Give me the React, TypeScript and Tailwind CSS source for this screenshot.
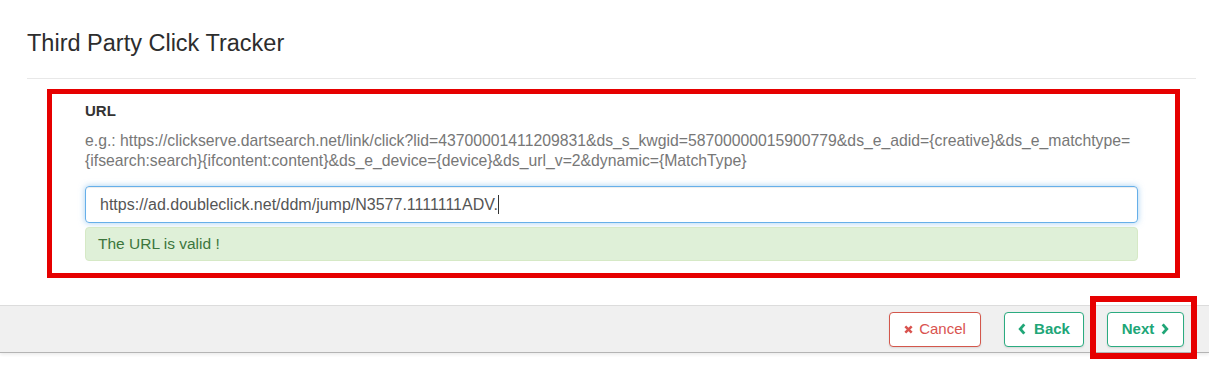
const exampleLine1 =
  "e.g.: https://clickserve.dartsearch.net/link/click?lid=43700001411209831&ds_s_kwgid=58700000015900779&ds_e_adid={creative}&ds_e_matchtype=";
const exampleLine2 =
  "{ifsearch:search}{ifcontent:content}&ds_e_device={device}&ds_url_v=2&dynamic={MatchType}";

function TimesIcon() {
  return (
    <svg width="9" height="9" viewBox="0 0 9 9" className="flex-none">
      <path d="M1.3 1.3 L7.7 7.7 M7.7 1.3 L1.3 7.7" stroke="currentColor" strokeWidth="2.5" />
    </svg>
  );
}

function Chevron({ dir }: { dir: "left" | "right" }) {
  return (
    <svg width="8" height="12" viewBox="0 0 8 12" className="flex-none">
      <path
        d={dir === "left" ? "M6.3 1.3 L2.2 6 L6.3 10.7" : "M1.7 1.3 L5.8 6 L1.7 10.7"}
        fill="none"
        stroke="currentColor"
        strokeWidth="2.8"
      />
    </svg>
  );
}

export default function App() {
  return (
    <div className="w-[1209px] h-[374px] bg-white font-['Liberation_Sans',Arial,sans-serif] overflow-hidden">
      <div className="pl-[27px] pr-[13px] pt-[30px]">
        <h1 className="text-[23.5px] leading-[26px] text-[#2d2d2d] font-normal">
          Third Party Click Tracker
        </h1>
        <div className="mt-[22px] border-b border-[#e8e8e8]" />

        <div className="mt-[10px] ml-[20px] mr-[16px] border-[5px] border-[#e60000] pl-[33px] pr-[37px] pt-[7px] pb-[12px]">
          <div className="text-[15px] leading-[20px] font-bold text-[#333]">URL</div>
          <p className="mt-[10px] text-[15.75px] leading-[20px] text-[#777] whitespace-nowrap">
            {exampleLine1}
            <br />
            {exampleLine2}
          </p>

          <div className="mt-[15px] h-[37px] flex items-center rounded-[4px] border border-[#66afe9] shadow-[inset_0_1px_1px_rgba(0,0,0,0.075),0_0_6px_rgba(102,175,233,0.6)] px-[14px] text-[16px] text-[#555]">
            <span>https://ad.doubleclick.net/ddm/jump/N3577.1111111ADV.</span>
            <span className="w-px h-[19px] bg-[#333]" />
          </div>

          <div className="mt-[4px] h-[34px] flex items-center rounded-[4px] border border-[#d6e9c6] bg-[#dff0d8] px-[12px] text-[15.5px] text-[#3c763d]">
            The URL is valid !
          </div>
        </div>
      </div>

      <div className="mt-[27px] h-[48px] border-t border-[#dcdcdc] border-b border-b-[#b4b4b4] bg-[#f0f0f0] shadow-[0_2px_3px_rgba(0,0,0,0.07)] flex items-center justify-end gap-[23px] pr-[25px]">
        <button className="w-[92px] h-[35px] flex items-center justify-center gap-[6px] rounded-[4px] border border-[#d3574c] bg-white text-[#d9534f] text-[15px] shadow-[0_1px_2px_rgba(0,0,0,0.1)]">
          <TimesIcon />
          Cancel
        </button>
        <button className="w-[80px] h-[35px] flex items-center justify-center gap-[8px] rounded-[4px] border border-[#2bab80] bg-white text-[#20a677] text-[15px] font-bold shadow-[0_1px_2px_rgba(0,0,0,0.1)]">
          <Chevron dir="left" />
          Back
        </button>
        <div className="relative">
          <button className="w-[77px] h-[35px] flex items-center justify-center gap-[7px] rounded-[4px] border border-[#2bab80] bg-white text-[#20a677] text-[15px] font-bold shadow-[0_1px_2px_rgba(0,0,0,0.1)]">
            Next
            <Chevron dir="right" />
          </button>
          <div className="absolute -left-[17px] -right-[13px] -top-[16px] -bottom-[12px] border-[6px] border-[#e60000] pointer-events-none" />
        </div>
      </div>
    </div>
  );
}
